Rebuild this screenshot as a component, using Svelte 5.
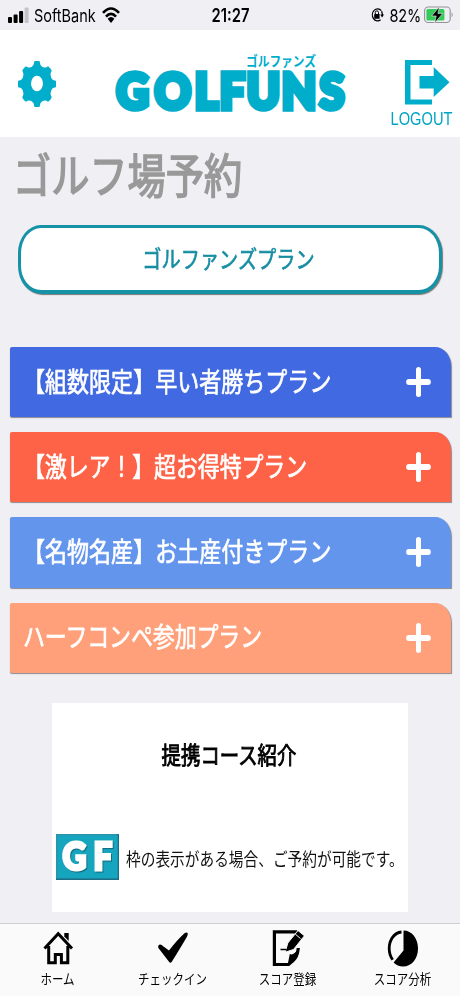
<script>
  const plans = [
    { label: '【組数限定】早い者勝ちプラン', color: '#4169e1', spacing: 0.03 },
    { label: '【激レア！】超お得特プラン', color: '#ff6347', spacing: -0.15 },
    { label: '【名物名産】お土産付きプラン', color: '#6495ed', spacing: 0.03 },
    { label: 'ハーフコンペ参加プラン', color: '#ffa07a', spacing: -0.15 },
  ];
  const tabs = [
    { id: 'home', label: 'ホーム' },
    { id: 'check', label: 'チェックイン' },
    { id: 'score', label: 'スコア登録' },
    { id: 'chart', label: 'スコア分析' },
  ];

  // Eight-toothed cog on an ellipse, teeth joined by curved valleys.
  function polar(deg, r) {
    const a = (deg * Math.PI) / 180;
    return `${(19 + 19 * r * Math.sin(a)).toFixed(2)} ${(23 - 23 * r * Math.cos(a)).toFixed(2)}`;
  }
  const cog = Array.from({ length: 8 }, (_, i) => {
    const a = i * 45;
    const r = i % 2 ? 0.97 : 1;
    return `${i ? 'L' : 'M'}${polar(a - 8, r)}Q${polar(a, r + 0.03)} ${polar(a + 8, r)}L${polar(a + 12, 0.86)}Q${polar(a + 22.5, 0.74)} ${polar(a + 33, 0.86)}`;
  }).join('') + 'Z';
</script>

<div class="app">
  <div class="status">
    <div class="side">
      <svg class="signal" width="21" height="16" viewBox="0 0 21 16">
        <rect x="0" y="10" width="4" height="6" rx="1" />
        <rect x="5.6" y="7.5" width="4" height="8.5" rx="1" />
        <rect x="11.1" y="4" width="4" height="12" rx="1" />
        <rect x="16.6" y="0.5" width="4" height="15.5" rx="1" fill="#c4c4c8" />
      </svg>
      <span class="tall carrier">SoftBank</span>
      <svg class="wifi" width="18" height="16" viewBox="0 0 18 16" fill="none" stroke="#000" stroke-width="2.7">
        <path d="M1 5.8Q9-2.8 17 5.8M4 9.6Q9 4.2 14 9.6" />
        <path d="M5.6 11.8Q9 8.4 12.4 11.8L9 16Z" fill="#000" stroke="none" />
      </svg>
    </div>
    <span class="tall clock">21:27</span>
    <div class="side right">
      <svg width="14" height="16" viewBox="0 0 14 16">
        <path d="M11.3 3.7A5.2 6 0 1 0 10.600 12.800M11.600 4.300Q12.400 6 12.300 8.500" fill="none" stroke="#000" stroke-width="1.300" />
        <path d="M10.200 7.500h3.800l-1.900 3z" />
        <rect x="4.200" y="7" width="5.400" height="4.800" rx=".6" />
        <path d="M5.300 7V5.600a1.600 1.800 0 0 1 3.200 0V7" fill="none" stroke="#000" />
      </svg>
      <span class="tall battery">82%</span>
      <svg width="29" height="18" viewBox="0 0 29 18">
        <rect x=".6" y="1" width="25.6" height="15.5" rx="3.6" fill="none" stroke="#929296" stroke-width="1.1" />
        <rect x="2.4" y="3" width="18" height="11.5" rx="1.5" fill="#35cb5b" />
        <path d="M27.6 6.3q2.2 2.4 0 4.9z" fill="#929296" />
        <path d="M15.4.8 7.6 10h4.6l-1.500 7 8-9.600h-4.800z" stroke="#efeff4" stroke-width=".6" />
      </svg>
    </div>
  </div>

  <header>
    <svg class="gear" width="38" height="46" viewBox="0 0 38 46">
      <path d={cog} fill="#00adcb" />
      <ellipse cx="19" cy="22.500" rx="6" ry="7.700" fill="#fff" />
    </svg>
    <svg class="logo" width="234" height="64" viewBox="0 0 234 64">
      <text class="kana" x="132" y="14" textLength="70" lengthAdjust="spacingAndGlyphs">ゴルファンズ</text>
      <text class="word" transform="scale(1 1.11)" y="51.100" x="2.200 40.600 80.500 105.500 132.500 167.500 205.500">GOLFUNS</text>
    </svg>
    <div class="logout">
      <svg width="45" height="45" viewBox="0 0 45 45" fill="#00adcb">
        <path d="M0 0H27V5H5.500V39.500H27V44.500H0Z" />
        <path d="M14.500 16H28.700V7L44.500 22.200 28.700 37V28.500H14.500Z" />
      </svg>
      <span class="tall">LOGOUT</span>
    </div>
  </header>

  <main>
    <h1><span class="tall">ゴルフ場予約</span></h1>
    <button class="plan-main"><span class="tall">ゴルファンズプラン</span></button>

    <div class="plans">
      {#each plans as plan}
        <div class="plan" style:background={plan.color}>
          <span class="tall" style:letter-spacing="{plan.spacing}px">{plan.label}</span>
          <svg width="25" height="30" viewBox="0 0 25 30" stroke="#fff" stroke-linecap="round">
            <path d="M12.500 2.500V27.500" stroke-width="5" />
            <path d="M3 15H22" stroke-width="5.800" />
          </svg>
        </div>
      {/each}
    </div>

    <section class="card">
      <h2><span class="tall">提携コース紹介</span></h2>
      <div class="note">
        <svg width="63" height="46" viewBox="0 0 63 46">
          <rect width="63" height="46" fill="#176f88" />
          <rect width="61.500" height="44.500" fill="#2a94ab" />
          <rect x="1.500" y="1.500" width="60" height="42.500" fill="#16a5bf" />
          <g transform="scale(1 1.130)">
            <text class="gf" x="6.500 37.500" y="32">GF</text>
          </g>
        </svg>
        <span class="tall">枠の表示がある場合、ご予約が可能です。</span>
      </div>
    </section>
  </main>

  <nav>
    {#each tabs as tab}
      <div class="tab">
        <svg width="32" height="38" viewBox="0 0 32 38">
          {#if tab.id === 'home'}
            <path d="M22.300 3h4.400v8l-4.400-4.600z" />
            <path d="M2.500 18.600 16.200 3.800 30 18.600M6.700 16V32.800H13.300V24.500H19.400V32.800H25.800V16" fill="none" stroke="#000" stroke-width="3" />
          {:else if tab.id === 'check'}
            <path d="M1.200 16Q3 13 6.500 16.500L12 20.500Q20 10 27.500 3.200Q30 1.500 30.800 3.500Q31 5 29.500 7.500Q24 17 14.800 31.800Q13.500 33.500 12 31.800L1.800 18.500Q.8 17 1.200 16Z" />
          {:else if tab.id === 'score'}
            <path d="M25 1.900H2.400V34.500H16.500Q26 27 26.300 18" fill="none" stroke="#000" stroke-width="3.200" />
            <path d="M15.500 35.500 17.800 24Q21.500 26 27 18 28 31 15.500 35.500Z" />
            <path d="M26 .5 32.400 5.800 21.500 19.500 13.200 22.200 15.800 13Z" stroke="#fafafa" stroke-width="1" />
            <path d="m23.300 4.100 5.300 4.600" stroke="#fafafa" stroke-width="1" />
            <path d="M8.500 19.500h6" stroke="#000" stroke-width="1.500" />
          {:else}
            <path d="M16.500.5C25 .5 31 8.500 31 18.500S25 36.500 16 36.500Q10.500 36.500 6.600 32.600L16.500 20.500Z" />
            <path d="M14.500 2C7 2.800 2.200 10 2.200 18.500Q2.200 25 5.700 29.800" fill="none" stroke="#000" stroke-width="2.800" />
          {/if}
        </svg>
        <span class="tall">{tab.label}</span>
      </div>
    {/each}
  </nav>
</div>

<style>
  .app {
    width: 460px;
    height: 996px;
    display: flex;
    flex-direction: column;
    overflow: hidden;
    background: #efeff4;
    color: #000;
    font-family: "Liberation Sans", "Noto Sans CJK JP", sans-serif;
  }
  svg { display: block; flex: none; }
  .tall {
    display: inline-block;
    white-space: nowrap;
    transform: scaleY(1.217);
  }
  .status {
    height: 30px;
    display: flex;
    align-items: center;
    justify-content: space-between;
    padding: 0 7px 0 8px;
    font-family: Inter, sans-serif;
  }
  .side { display: flex; align-items: center; width: 180px; }
  .right { justify-content: flex-end; }
  .carrier { font-size: 14.5px; margin-left: 5px; width: 63px; }
  .wifi { margin-left: 5px; }
  .clock { font-size: 14.8px; font-weight: 600; padding-top: 1px; }
  .battery { font-size: 14.5px; margin: 0 3px 0 6px; letter-spacing: -.2px; }
  header {
    height: 107px;
    flex: none;
    box-sizing: border-box;
    background: #fff;
    display: flex;
    justify-content: space-between;
    padding: 22px 7px 0 18px;
  }
  .gear { margin-top: 9px; }
  .logo { margin-left: 16px; overflow: visible; }
  .kana {
    font: 700 13.5px/1 "Noto Sans CJK JP", sans-serif;
    fill: #00adcb;
  }
  .word {
    font: 900 45px/1 Lato, sans-serif;
    fill: #00adcb;
    stroke: #00adcb;
    stroke-width: 5px;
  }
  .logout {
    width: 63px;
    display: flex;
    flex-direction: column;
    align-items: center;
    padding-top: 8px;
    color: #00a5c4;
    font-size: 14.7px;
  }
  .logout svg { margin-left: 12px; }
  .logout .tall { margin-top: 5px; line-height: 18px; }
  main { flex: 1; }
  h1 {
    margin: 0;
    padding: 12px 0 0 13px;
    height: 76px;
    box-sizing: border-box;
    color: #999;
    font-size: 38.2px;
    line-height: 56px;
    font-weight: 400;
    -webkit-text-stroke: 1.3px #999;
  }
  .plan-main {
    display: flex;
    align-items: center;
    justify-content: center;
    width: 424px;
    height: 69px;
    margin: 12px 0 0 18px;
    padding: 0 3px 2px 0;
    background: #fff;
    border: 3px solid #1692a7;
    border-bottom-width: 4px;
    border-radius: 23px / 28px;
    box-shadow: 1px 1px 1px #777;
    color: #168da2;
    font: 400 19.2px "Noto Sans CJK JP", sans-serif;
    -webkit-text-stroke: .5px #168da2;
  }
  .plans {
    display: flex;
    flex-direction: column;
    gap: 15px;
    padding: 53px 9px 0 10px;
  }
  .plan {
    height: 70.2px;
    box-sizing: border-box;
    display: flex;
    align-items: center;
    justify-content: space-between;
    padding: 0 20px 0 13px;
    border-radius: 2px 16px 0 2px / 2px 19px 0 2px;
    box-shadow: .5px 1px 1px #8a8a90;
    color: #fff;
    font-size: 22px;
  }
  .plan .tall { padding-bottom: 5px; -webkit-text-stroke: .55px #fff; }
  .card {
    width: 356px;
    height: 209px;
    margin: 30px 0 0 52px;
    background: #fff;
    display: flow-root;
  }
  h2 {
    margin: 37px 2px 0 0;
    height: 31px;
    text-align: center;
    font-size: 19.4px;
    line-height: 30px;
    font-weight: 400;
    -webkit-text-stroke: .75px #000;
  }
  .note {
    display: flex;
    align-items: center;
    padding: 63px 0 0 4px;
    font-size: 14.7px;
    color: #111;
  }
  .note .tall { margin-left: 7px; padding-top: 2px; }
  .gf {
    font: 900 33px/1 Lato, sans-serif;
    fill: #fff;
    stroke: #fff;
    stroke-width: 2.8px;
    filter: drop-shadow(1px 1px 0 #126f83);
  }
  nav {
    height: 73px;
    box-sizing: border-box;
    flex: none;
    border-top: 1px solid #cfcfd2;
    background: #fafafa;
    display: flex;
  }
  .tab {
    width: 115px;
    display: flex;
    flex-direction: column;
    align-items: center;
    padding-top: 6px;
    font-size: 11.5px;
  }
  .tab .tall { margin-top: 3px; line-height: 17px; }
</style>
